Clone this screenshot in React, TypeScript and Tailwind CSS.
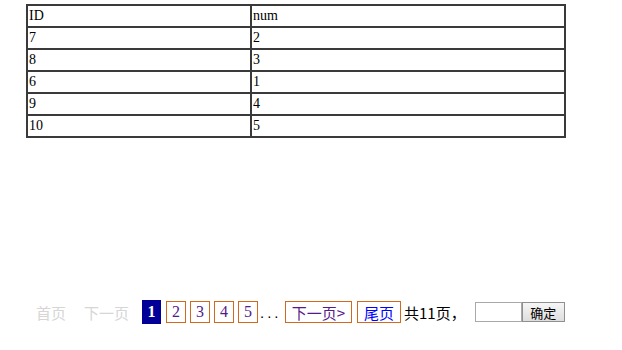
import React from "react";

const rows: [string, string][] = [
  ["ID", "num"],
  ["7", "2"],
  ["8", "3"],
  ["6", "1"],
  ["9", "4"],
  ["10", "5"],
];

const cjk = "font-['Noto_Sans_CJK_SC','Liberation_Sans',sans-serif]";

function PageBox({ children, w, blue }: { children: React.ReactNode; w: string; blue?: boolean }) {
  return (
    <span
      className={`flex h-[22px] items-center justify-center border border-[#d2691e] ${w} ${
        blue ? "text-[#0000ff]" : "text-[#551a8b]"
      }`}
    >
      {children}
    </span>
  );
}

export default function App() {
  return (
    <div className="h-[350px] w-[622px] bg-white">
      <table className="ml-[26px] mt-[4px] w-[540px] border-collapse border-2 border-[#3a3a3a] font-['Liberation_Serif',serif] text-[14px] text-black">
        <tbody>
          {rows.map(([a, b]) => (
            <tr key={a} className="h-[22px]">
              <td className="w-[224px] border-2 border-[#3a3a3a] px-px py-0 leading-[18px]">{a}</td>
              <td className="border-2 border-[#3a3a3a] px-px py-0 leading-[18px]">{b}</td>
            </tr>
          ))}
        </tbody>
      </table>

      <div className={`ml-[36px] mt-[162px] flex items-center text-[15px] leading-none ${cjk}`}>
        <span className="text-[#d6d6d6]">首页</span>
        <span className="ml-[18px] text-[#d6d6d6]">下一页</span>
        <span className="ml-[13px] flex h-[24px] w-[19px] items-center justify-center bg-[#000099] font-['Liberation_Serif',serif] text-[16px] font-bold text-white">
          1
        </span>
        <div className="ml-[5px] flex items-center gap-[4px] font-['Liberation_Serif',serif] text-[16px]">
          <PageBox w="w-[20px]">2</PageBox>
          <PageBox w="w-[20px]">3</PageBox>
          <PageBox w="w-[20px]">4</PageBox>
          <PageBox w="w-[20px]">5</PageBox>
        </div>
        <span className="ml-[2px] w-[25px] font-['Liberation_Sans',sans-serif] tracking-[3px] text-black">...</span>
        <PageBox w="w-[67px]">下一页&gt;</PageBox>
        <span className="ml-[5px]">
          <PageBox w="w-[44px]" blue>
            尾页
          </PageBox>
        </span>
        <span className="ml-[3px] text-black">共11页，</span>
        <input
          type="text"
          className="ml-[9px] h-[20px] w-[47px] border border-[#a9a9a9] bg-white outline-none"
        />
        <button className="flex h-[20px] w-[43px] items-center justify-center border border-[#8f8f8f] bg-gradient-to-b from-[#f6f6f6] to-[#dedede] text-[13px] text-black">
          确定
        </button>
      </div>
    </div>
  );
}
